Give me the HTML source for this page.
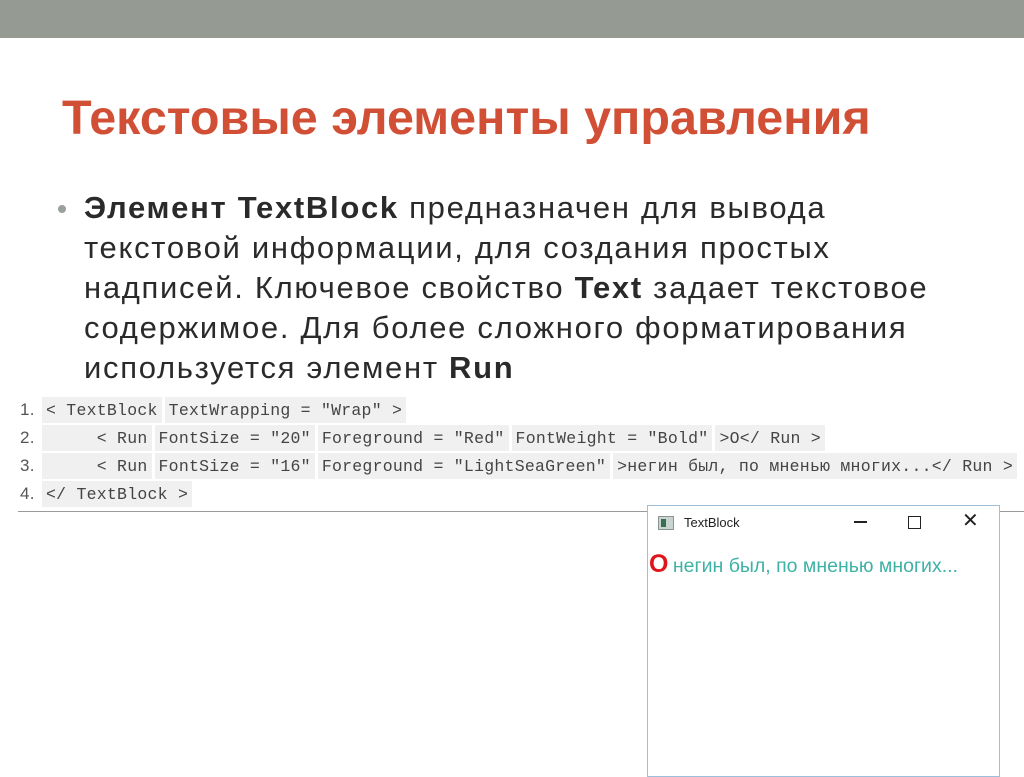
<!DOCTYPE html>
<html><head><meta charset="utf-8"><style>
body{margin:0;width:1024px;height:767px;background:#fff;position:relative;overflow:hidden;font-family:"Liberation Sans","DejaVu Sans",sans-serif}
.top{position:absolute;left:0;top:0;width:1024px;height:38px;background:#959a93}
h1{position:absolute;left:62px;top:90px;margin:0;font-size:48.5px;font-weight:bold;color:#d14f35;white-space:nowrap}
.body{position:absolute;left:84px;top:188px;font-size:31px;letter-spacing:1.7px;line-height:40px;color:#2a2a2a;white-space:nowrap}
.dot{position:absolute;left:58px;top:205px;width:8px;height:8px;border-radius:50%;background:#9aa09a}
.code{position:absolute;left:0;top:396px;font-family:"Liberation Mono","DejaVu Sans Mono",monospace;font-size:16.5px;letter-spacing:0.25px;color:#444}
.row{position:absolute;left:20px;height:28px;line-height:28px;white-space:pre}
.row span{background:#f0f0f0;padding:0 4px;margin-right:3px;display:inline-block;height:26px}
.n{color:#555;font-family:"Liberation Sans",sans-serif;font-size:17px;display:inline-block;width:22px;font-style:normal}
.line{position:absolute;left:18px;top:511px;width:1006px;height:1px;background:#9a9a9a}
.win{position:absolute;left:647px;top:505px;width:351px;height:270px;border:1px solid #9cc0dc;background:#fff}
.wt{position:absolute;left:36px;top:9px;font-size:13px;color:#222}
.ic{position:absolute;left:10px;top:10px;width:14px;height:12px;background:#c9d3cf;border:1px solid #8a958f}
.ic:after{content:"";position:absolute;left:2px;top:2px;width:5px;height:8px;background:#3b6d55}
.ctl{position:absolute;top:4px;font-size:16px;color:#222}
.msg{position:absolute;left:1px;top:44px;white-space:nowrap}
</style></head><body>
<div class="top"></div>
<h1>Текстовые элементы управления</h1>
<div class="dot"></div>
<div class="body"><b>Элемент TextBlock</b> предназначен для вывода<br>текстовой информации, для создания простых<br>надписей. Ключевое свойство <b>Text</b> задает текстовое<br>содержимое. Для более сложного форматирования<br>используется элемент <b>Run</b></div>
<div class="code">
<div class="row" style="top:0"><i class="n">1.</i><span>&lt; TextBlock</span><span>TextWrapping = "Wrap" &gt;</span></div>
<div class="row" style="top:28px"><i class="n">2.</i><span>     &lt; Run</span><span>FontSize = "20"</span><span>Foreground = "Red"</span><span>FontWeight = "Bold"</span><span>&gt;O&lt;/ Run &gt;</span></div>
<div class="row" style="top:56px"><i class="n">3.</i><span>     &lt; Run</span><span>FontSize = "16"</span><span>Foreground = "LightSeaGreen"</span><span>&gt;негин был, по мненью многих...&lt;/ Run &gt;</span></div>
<div class="row" style="top:84px"><i class="n">4.</i><span>&lt;/ TextBlock &gt;</span></div>
</div>
<div class="line"></div>
<div class="win">
<div class="ic"></div><div class="wt">TextBlock</div>
<div class="ctl" style="left:206px;top:15px;width:13px;height:1.5px;background:#222"></div>
<div class="ctl" style="left:260px;top:10px;width:11px;height:11px;border:1.5px solid #222"></div>
<div class="ctl" style="left:314px;top:2px;font-size:20px">✕</div>
<div class="msg"><b style="color:#e0151b;font-size:25px">O</b> <span style="color:#3fb2a6;font-size:19.5px">негин был, по мненью многих...</span></div>
</div>
</body></html>
